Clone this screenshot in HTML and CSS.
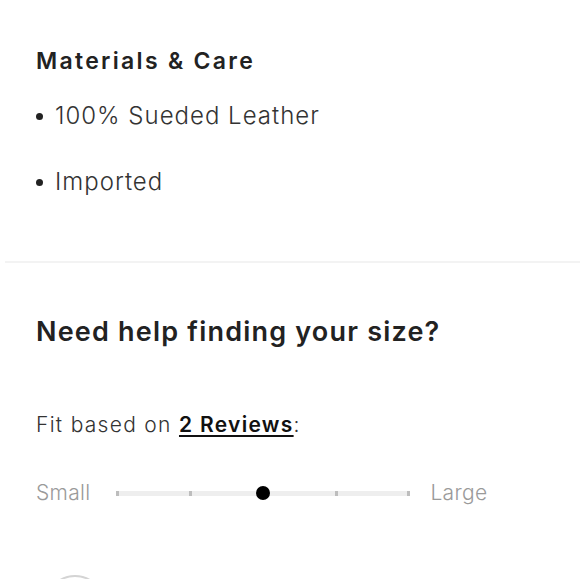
FILE: index.html
```html
<!DOCTYPE html>
<html lang="en">
<head>
<meta charset="utf-8">
<title>Product details</title>
<link rel="stylesheet" href="styles.css">
</head>
<body>
  <section class="care">
    <h2 class="care-title">Materials &amp; Care</h2>
    <ul class="care-list">
      <li>100% Sueded Leather</li>
      <li>Imported</li>
    </ul>
  </section>
  <div class="divider"></div>
  <section class="fit">
    <h2 class="fit-title">Need help finding your size?</h2>
    <p class="fit-summary">Fit based on <a href="#" class="fit-link">2 Reviews</a>:</p>
    <div class="scale">
      <span class="scale-label">Small</span>
      <div class="track">
        <span class="tick"></span>
        <span class="tick"></span>
        <span class="tick tick-active"></span>
        <span class="tick"></span>
        <span class="tick"></span>
      </div>
      <span class="scale-label">Large</span>
    </div>
    <div class="avatar"></div>
  </section>
</body>
</html>
```

FILE: styles.css
```css
html, body {
  margin: 0;
  padding: 0;
  background: #ffffff;
}
body {
  font-family: Inter, "Noto Sans", sans-serif;
  color: #333333;
  overflow: hidden;
  height: 579px;
}
.care {
  padding: 46px 36px 0 36px;
}
.care-title {
  margin: 0;
  font-size: 23px;
  line-height: 30px;
  font-weight: 600;
  color: #222222;
  letter-spacing: 2.3px;
}
.care-list {
  list-style: none;
  margin: 25px 0 0 0;
  padding: 0;
  display: flex;
  flex-direction: column;
  gap: 36px;
}
.care-list li {
  display: flex;
  align-items: center;
  gap: 12px;
  font-size: 24px;
  line-height: 30px;
  letter-spacing: 1px;
  color: #333333;
  font-weight: 300;
}
.care-list li::before {
  content: "";
  width: 7px;
  height: 7px;
  border-radius: 50%;
  background: #222222;
  flex: none;
}
.divider {
  margin: 64px 0 0 5px;
  height: 2px;
  background: #f3f3f3;
}
.fit {
  padding: 51px 36px 0 36px;
  position: relative;
}
.fit-title {
  margin: 0;
  font-size: 27px;
  line-height: 36px;
  font-weight: 600;
  color: #222222;
  letter-spacing: 1.2px;
}
.fit-summary {
  margin: 60px 0 0 0;
  font-size: 21px;
  line-height: 30px;
  letter-spacing: 1.3px;
  color: #333333;
  font-weight: 300;
}
.fit-link {
  color: #111111;
  font-weight: 600;
  text-decoration: underline;
  text-decoration-thickness: 2px;
  text-underline-offset: 3px;
}
.scale {
  margin-top: 38px;
  display: flex;
  align-items: center;
  height: 30px;
}
.scale-label {
  font-size: 21px;
  line-height: 30px;
  color: #9a9a9a;
  letter-spacing: 0.3px;
  font-weight: 300;
}
.track {
  margin: 0 20px 0 26px;
  width: 294px;
  height: 5px;
  background: #eeeeee;
  display: flex;
  justify-content: space-between;
  align-items: center;
  position: relative;
}
.tick {
  width: 3px;
  height: 5px;
  background: #bdbdbd;
}
.tick-active {
  width: 14px;
  height: 14px;
  border-radius: 50%;
  background: #000000;
  margin: 0 -5px;
}
.avatar {
  margin: 67px 0 0 9px;
  width: 60px;
  height: 60px;
  border-radius: 50%;
  border: 2px solid #d4d4d4;
  box-sizing: border-box;
}
```
